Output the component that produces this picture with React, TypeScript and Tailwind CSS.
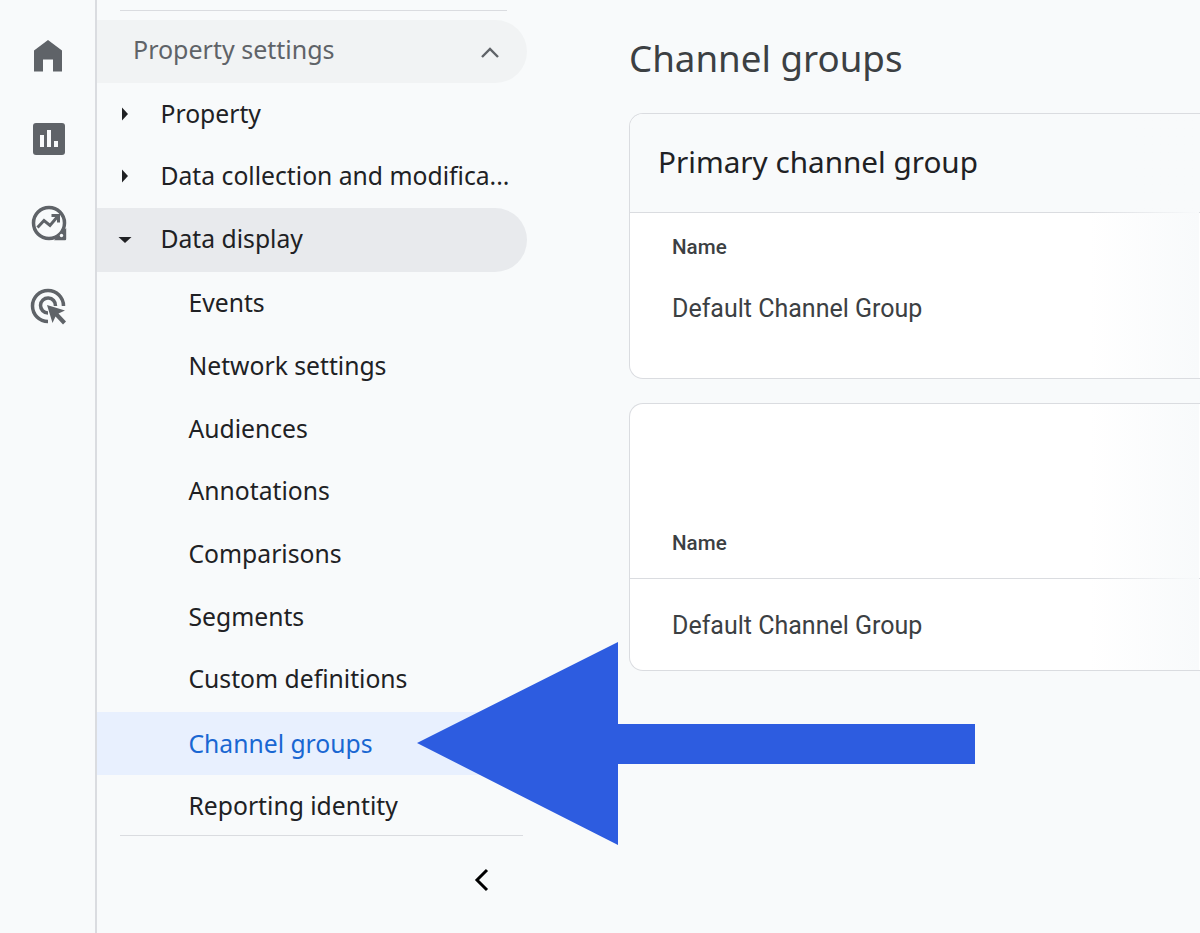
import React from 'react';

const sans = 'font-["Noto_Sans",sans-serif]';
const roboto = 'font-["Roboto",sans-serif]';

function HomeIcon() {
  return <svg width="28" height="32" viewBox="0 0 28 32" className="text-[#5f6368]">
      <path fill="currentColor" d="M14 0 L28 10.5 V31.5 H19 V19.5 H9 V31.5 H0 V10.5 Z" />
    </svg>;
}

function ReportsIcon() {
  return <svg width="32" height="32" viewBox="0 0 32 32">
      <rect width="32" height="32" rx="3" fill="#5f6368" />
      <rect x="7" y="12" width="4" height="12" fill="#f8fafb" />
      <rect x="14" y="7" width="4" height="17" fill="#f8fafb" />
      <rect x="21" y="18" width="4" height="6" fill="#f8fafb" />
    </svg>;
}

function ExploreIcon() {
  return <svg width="36" height="36" viewBox="0 0 36 36" fill="none" stroke="#5f6368">
      <circle cx="18" cy="18" r="15.5" strokeWidth="3.5" />
      <path fill="#5f6368" stroke="none" d="M35.2 23 V34 Q35.2 35.2 34 35.2 H23 Z" />
      <path strokeWidth="3" d="M6.5 22.5 L13 15.5 L19 20.5 L27 11" />
      <path strokeWidth="3" d="M20.5 10.5 H27.5 V17.5" />
      <circle cx="30.5" cy="30.5" r="1.7" fill="#f8fafb" stroke="none" />
    </svg>;
}

function AdvertisingIcon() {
  return <svg width="37" height="37" viewBox="0 0 37 37" fill="none" stroke="#5f6368">
      <path strokeWidth="3.5" d="M18 33.5 A15.5 15.5 0 1 1 33.5 18" />
      <path strokeWidth="3.5" d="M18 25 A7.5 7.5 0 1 1 25.5 18" />
      <path fill="#5f6368" stroke="none" d="M17 17 L35 22.5 L28.5 25.5 L36 33.5 L33 36.5 L25.5 28.5 L22.5 35 Z" />
    </svg>;
}

function Caret({ open }: { open?: boolean }) {
  return <svg width="14" height="16" viewBox="0 0 14 16" className="absolute left-[21px] top-1/2 -translate-y-1/2" fill="#202124">
      {open ? <path d="M0.5 5 H13.5 L7 11 Z" /> : <path d="M4 1.5 L10 8 L4 14.5 Z" />}
    </svg>;
}

const children = ['Events', 'Network settings', 'Audiences', 'Annotations', 'Comparisons', 'Segments', 'Custom definitions'];

function NavRow({ label, className = '' }: { label: string; className?: string }) {
  return <div className={`relative flex h-[62.7px] items-center pl-[91.5px] text-[24.7px] text-[#202124] ${className}`}>
      {label}
    </div>;
}

// fades the right end of a card into the page background, borders included
function CardFade() {
  return <div className="absolute -bottom-px -top-px right-[30px] w-[110px] bg-gradient-to-r from-transparent to-[#f8fafb]" />;
}

export default function App() {
  return <div className={`relative flex h-[933px] w-[1200px] overflow-hidden bg-[#f8fafb] ${sans}`}>
      {/* Icon rail */}
      <div className="flex w-[97px] shrink-0 flex-col items-center border-r-2 border-[#dadce0] pl-0.5">
        <div className="mt-[40px] -ml-0.5 flex h-[33px] items-start"><HomeIcon /></div>
        <div className="mt-[50px] flex h-[32px] items-center"><ReportsIcon /></div>
        <div className="mt-[50px] flex h-[36px] items-center"><ExploreIcon /></div>
        <div className="mt-[47px] flex h-[37px] items-center"><AdvertisingIcon /></div>
      </div>

      {/* Admin nav */}
      <div className="w-[430px] shrink-0">
        <div className="ml-[23px] mr-[20px] mt-[10px] h-px bg-[#dadce0]" />
        <div className="mt-[9px] flex h-[63px] items-center justify-between rounded-r-[32px] bg-[#f1f3f4] pb-1 pl-[36px] pr-[27px] text-[25px] text-[#5f6368]">
          <span>Property settings</span>
          <svg className="mt-1" width="20" height="12" viewBox="0 0 20 12" fill="none" stroke="#5f6368" strokeWidth="2.4"><path d="M2 11 L10 3 L18 11" /></svg>
        </div>
        <div className="relative flex h-[62px] items-center pl-[63.5px] text-[24.7px] text-[#202124]"><Caret />Property</div>
        <div className="relative flex h-[62px] items-center whitespace-nowrap pl-[63.5px] text-[24.7px] text-[#202124]">
          <Caret />
          Data collection and modifica...
        </div>
        <div className="relative mt-px flex h-[64px] items-center rounded-r-[32px] bg-[#e8eaed] pb-[2px] pl-[63.5px] text-[24.7px] text-[#202124]"><Caret open />Data display</div>
        <div className="-mt-[0.6px]">
          {children.map(label => <NavRow key={label} label={label} />)}
        </div>
        <NavRow label="Channel groups" className="mt-[1.6px] bg-[#e8f0fe] !text-[#1967d2]" />
        <NavRow label="Reporting identity" className="-mt-[2px] pt-[3px]" />
        <div className="ml-[23px] mr-[4px] h-px bg-[#dadce0]" />
        <div className="mt-[32px] pl-[376px]">
          <svg width="16" height="24" viewBox="0 0 16 24" fill="none" stroke="#000" strokeWidth="3"><path d="M14 2 L4 12 L14 22" /></svg>
        </div>
      </div>

      {/* Content */}
      <div className="min-w-0 flex-1 pl-[102px]">
        <h1 className="mt-[33px] h-[50px] whitespace-nowrap text-[36.7px] leading-[50px] text-[#3c4043]">Channel groups</h1>
        <div className="relative mt-[30px] h-[266px] w-[600px] overflow-hidden rounded-l-[14px] border border-r-0 border-[#dadce0] bg-white">
          <div className="flex h-[99px] items-center border-b border-[#dadce0] bg-[#f8fafb] pb-0.5 pl-[28px] text-[29.7px] text-[#202124]">Primary channel group</div>
          <div className={`pl-[42px] ${roboto}`}>
            <div className="mt-[20px] text-[20.6px] font-medium leading-[28px] text-[#3c4043]">Name</div>
            <div className="mt-[32px] text-[25px] leading-[32px] text-[#3c4043]">Default Channel Group</div>
          </div>
          <CardFade />
        </div>
        <div className="relative mt-[24px] h-[268px] w-[600px] overflow-hidden rounded-l-[14px] border border-r-0 border-[#dadce0] bg-white">
          <div className={`flex h-[175px] items-end border-b border-[#dadce0] pb-[21px] pl-[42px] text-[20.6px] font-medium leading-[28px] text-[#3c4043] ${roboto}`}>Name</div>
          <div className={`mt-[31px] pl-[42px] text-[25px] leading-[32px] text-[#3c4043] ${roboto}`}>Default Channel Group</div>
          <CardFade />
        </div>
      </div>

      {/* Annotation arrow */}
      <svg className="pointer-events-none absolute left-0 top-0" width="1200" height="933" viewBox="0 0 1200 933">
        <path fill="#2d5ce0" d="M417 743 L618 642 V724 H975 V764 H618 V845 Z" />
      </svg>
    </div>;
}
